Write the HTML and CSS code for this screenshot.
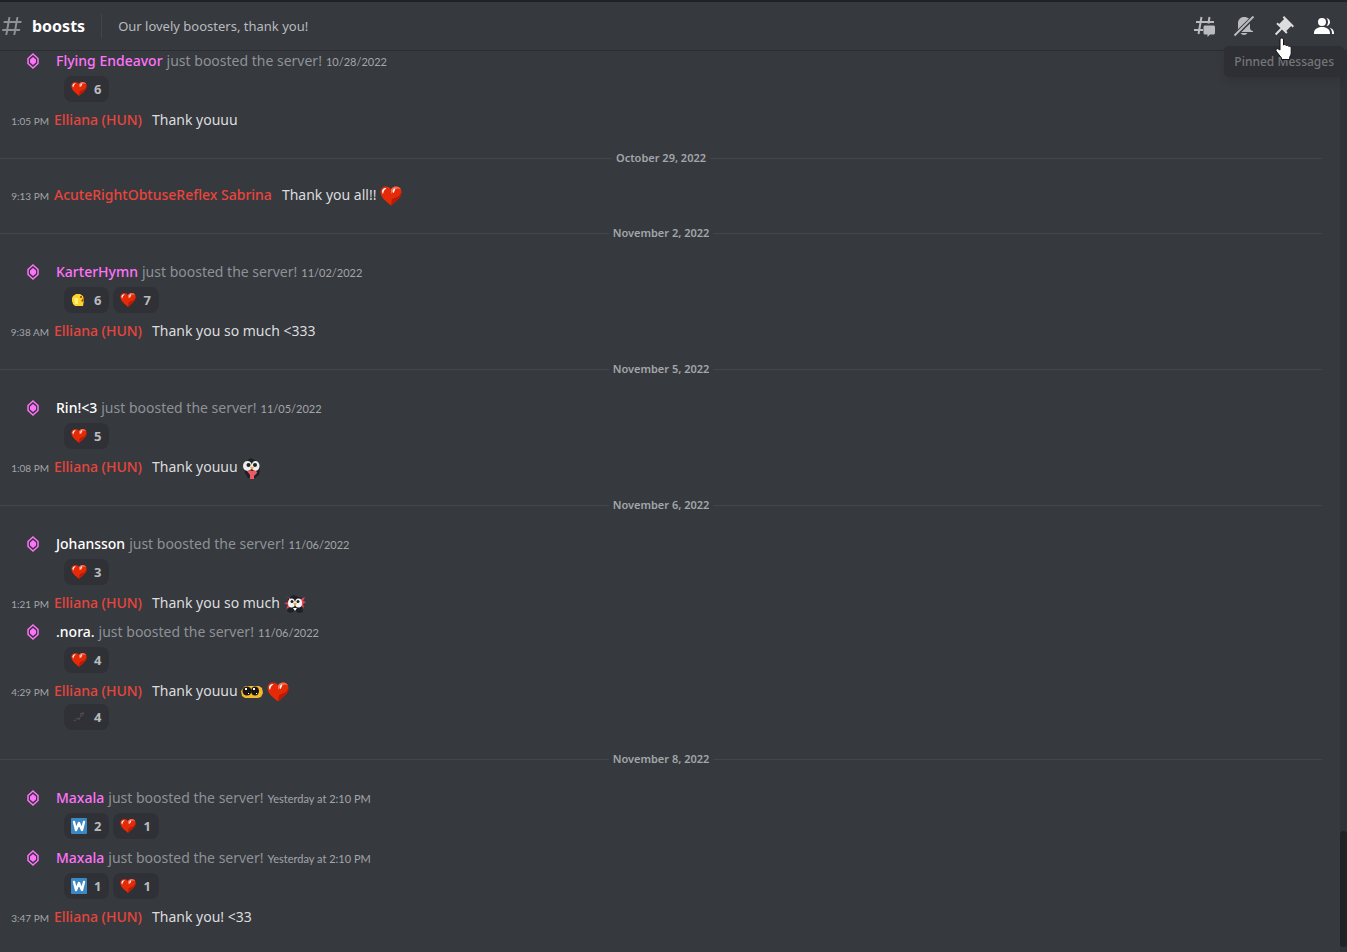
FILE: index.html
```html
<!DOCTYPE html>
<html lang="en">

<head>
    <meta charset="utf-8">
    <title>boosts</title>
    <link rel="stylesheet" href="styles.css">
</head>

<body>
    <!-- shared emoji and icons -->
    <svg class="sprites" aria-hidden="true">
        <symbol id="heart" viewBox="0 0 22 20">
            <path fill="#e52a08" d="M11 19.5C7 16 .5 12 .5 6C.5 2.500 3 .5 6 .5c2.300 0 4 1 5 3 1-2 2.700-3 5-3 3 0 5.500 2 5.500 5.500 0 6-6.500 10-10.500 13.500z" />
            <path fill="#b81b06" d="M21.500 6c0 6-6.500 10-10.500 13.500L12 13l7-3z" />
            <path fill="#fb6b50" d="M11 3.500C12 1.500 14 .5 16 .5s4 1 5 3l-3-1-4 1.500-3 4z" />
            <path fill="#fff" d="M2 6c0-2.500 1.500-4 4-4 1 .5-.5 1-1.500 2S3.500 7 3 8zM13 4c.5-1 1.500-1.600 2-1.500.5 1-.5 3-1.500 4.500-.8.500-1-1.500-.5-3z" />
        </symbol>
        <symbol id="gem" viewBox="0 0 14 16">
            <path fill="none" stroke="#ff73fa" stroke-width="1.500" d="M7 1l5 4.500v5L7 15l-5-4.500v-5z" />
            <path fill="#ff73fa" d="M7 4l3 2.500v3L7 12 4 9.500v-3z" />
        </symbol>
        <symbol id="face" viewBox="0 0 16 16">
            <path fill="#fbd52c" d="M1 6l1-2 3-2h4l3 2 1 4-1 6H4l-2-2-1-3z" />
            <path fill="#fff07a" d="M3 6h4v6H4z" />
            <path fill="#a85b10" d="M9 4h2v2H9zM12 6l1 2-1 2-2-1z" />
        </symbol>
        <symbol id="letter-w" viewBox="0 0 16 16">
            <rect width="16" height="16" rx="1" fill="#3b88c3" />
            <path fill="none" stroke="#fff" stroke-width="2.400" stroke-linejoin="round" stroke-linecap="round" d="M3 4l2 8 3-7 3 7 2-8" />
        </symbol>
        <symbol id="arrow" viewBox="0 0 16 16">
            <path fill="none" stroke="#554c53" stroke-width="1.500" stroke-dasharray="2 1" d="M3 12l4-3 1 1 4-6M9 5l3-1v3" />
        </symbol>
        <symbol id="penguin" viewBox="0 0 22 22">
            <path fill="#1e2124" d="M5 5l4-4 3 1 5 3 2 6-1 7-4 3H7l-3-5-1-5z" />
            <ellipse cx="6.500" cy="9" rx="4.500" ry="5" fill="#eee" />
            <ellipse cx="14.500" cy="9" rx="4" ry="5" fill="#eee" />
            <circle cx="7.500" cy="8" r="2" fill="#1e2124" />
            <circle cx="14" cy="8" r="2" fill="#1e2124" />
            <path fill="#f5a623" d="M9 10h4l-2 3z" />
            <path fill="#ef5866" d="M6 14c2-1 4-1 5 0 2-1 5-1 5 2l-3 3v3h-4v-4z" />
        </symbol>
        <symbol id="penguin-shy" viewBox="0 0 22 18">
            <path fill="#1e2124" d="M4 4l5-4 3 1 6 2v9l1 5-4 1-4-2-5 2-3-2 2-4z" />
            <path fill="#ee4357" d="M1 1l4 2v4L0 8l4 2-2 4 4-2V3zM17 4l4-2-2 4 3 1-3 2 1 4-4-3z" />
            <ellipse cx="7.500" cy="8" rx="3.500" ry="4.500" fill="#f4f4f4" />
            <ellipse cx="14.500" cy="8" rx="3.500" ry="4.500" fill="#f4f4f4" />
            <circle cx="8" cy="6.500" r="1.500" fill="#1e2124" />
            <circle cx="14" cy="6.500" r="1.500" fill="#1e2124" />
            <path fill="#f5a623" d="M9 8h4l-2 3z" />
            <path fill="#fff" d="M9 13h4l-2 3z" />
        </symbol>
        <symbol id="eyes" viewBox="0 0 22 14">
            <path fill="#f2b92b" d="M4 1h14l3 2 1 5-2 4-3 1H4l-3-2-1-5z" />
            <ellipse cx="6" cy="6" rx="4.500" ry="4.500" fill="#191516" />
            <ellipse cx="14" cy="6" rx="4" ry="4.500" fill="#191516" />
            <path fill="#fff" d="M4 3h2v2H4zM12 3h2v2h-2zM7 8h1v1H7zM15 8h1v1h-1z" />
        </symbol>
    </svg>

    <header class="header">
        <svg class="icon hash" viewBox="0 0 24 24">
            <path fill="currentColor" fill-rule="evenodd" d="M5.887 21c-.311 0-.547-.281-.493-.587L6 17H2.595c-.31 0-.546-.28-.492-.586l.175-1A.5.5 0 0 1 2.770 15H6.350l1.060-6H4.005c-.31 0-.546-.28-.492-.586l.175-1A.5.5 0 0 1 4.180 7H7.760l.637-3.587A.5.5 0 0 1 8.889 3h.984c.311 0 .547.281.493.587L9.760 7h6l.637-3.587A.5.5 0 0 1 16.889 3h.984c.311 0 .547.281.493.587L17.760 7h3.405c.31 0 .546.280.492.586l-.175 1a.5.5 0 0 1-.492.414H17.410l-1.060 6h3.405c.31 0 .546.280.492.586l-.175 1a.5.5 0 0 1-.492.414H16l-.637 3.587a.5.5 0 0 1-.492.413h-.984c-.311 0-.547-.281-.493-.587L14 17H8l-.637 3.587a.5.5 0 0 1-.492.413zM9.410 9l-1.060 6h6l1.060-6z" />
        </svg>
        <h1>boosts</h1>
        <p class="topic">Our lovely boosters, thank you!</p>
        <nav class="toolbar">
            <button aria-label="Threads">
                <svg class="icon" viewBox="0 0 24 24">
                    <path fill="none" stroke="currentColor" stroke-width="2" d="M9.500 3L6.500 20M17.500 3L16.400 9.500M4 8h18M2 16h9" />
                    <path fill="currentColor" d="M13 11.500h8.500c.8 0 1.500.7 1.500 1.500v6c0 .8-.7 1.500-1.500 1.500H18L15.500 23v-2.500H13c-.8 0-1.500-.7-1.500-1.500v-6c0-.8.7-1.500 1.500-1.500z" />
                </svg>
            </button>
            <button aria-label="Unmute Channel">
                <svg class="icon" viewBox="0 0 24 24">
                    <path fill="currentColor" d="M12 3c-3.314 0-6 2.686-6 6v5c0 .7-.2 1.300-.6 1.800L17 4.600C15.700 3.500 14 3 12 3zM18 9.500L9.500 18H21v-1c-1.656 0-3-1.343-3-3zM8.555 19a3.980 3.980 0 0 0 6.890 0z" />
                    <path stroke="currentColor" stroke-width="2" d="M2.500 21.500l19-19" />
                </svg>
            </button>
            <button class="active" aria-label="Pinned Messages">
                <svg class="icon" viewBox="0 0 24 24">
                    <path fill="currentColor" d="M22 12l-9.900-9.900-1.414 1.414 1.415 1.415-4.950 4.950-1.415-1.414L4.322 9.880l4.243 4.242-5.657 5.656 1.414 1.414 5.657-5.656 4.243 4.242 1.414-1.414-1.414-1.414L19.171 12l1.415 1.414z" />
                </svg>
            </button>
            <button class="on" aria-label="Member List">
                <svg class="icon" viewBox="0 0 24 24">
                    <path fill="currentColor" d="M14 8.006a4 4 0 1 1-8 0 4 4 0 0 1 8 0zM2 19.006c0-3.533 3.290-6 8-6 4.711 0 8 2.467 8 6v1H2zM20 20.006h2v-1c0-2.563-1.730-4.565-4.479-5.471C19.062 14.913 20 16.806 20 19.006zM14.883 11.908A4 4 0 0 0 18 8.006c0-2.037-1.531-3.724-3.503-3.969A5.990 5.990 0 0 1 16 8.006c0 1.443-.511 2.768-1.362 3.804z" />
                </svg>
            </button>
            <div class="tooltip" role="tooltip">Pinned Messages</div>
            <svg class="cursor" viewBox="0 0 17 24" aria-hidden="true">
                <path fill="#fff" stroke="#111" d="M5 13V3c0-2.700 3.500-2.700 3.500 0v5c1-.8 2.500-.5 2.800.6 1-.6 2.300-.2 2.500.8 1.200-.4 2.400.3 2.400 1.600v5c0 2-1.700 3.500-1.700 5.500v1H6.500v-1.500L1 14c-.8-1.500 1-3 2.300-2z" />
            </svg>
        </nav>
    </header>

    <main class="channel">
        <ol class="log">
            <li class="boost">
                <p class="line"><svg class="gem"><use href="#gem" /></svg><a class="name pink" href="#">Flying Endeavor</a> just boosted the server! <time>10/28/2022</time></p>
                <div class="reactions">
                    <button><svg><use href="#heart" /></svg>6</button>
                </div>
            </li>
            <li class="message">
                <p class="line"><time>1:05 PM</time><a class="name red" href="#">Elliana (HUN)</a><span>Thank youuu</span></p>
            </li>
            <li class="date"><span>October 29, 2022</span></li>
            <li class="message">
                <p class="line"><time>9:13 PM</time><a class="name red" href="#">AcuteRightObtuseReflex Sabrina</a><span>Thank you all!! <svg class="emoji"><use href="#heart" /></svg></span></p>
            </li>
            <li class="date"><span>November 2, 2022</span></li>
            <li class="boost">
                <p class="line"><svg class="gem"><use href="#gem" /></svg><a class="name pink" href="#">KarterHymn</a> just boosted the server! <time>11/02/2022</time></p>
                <div class="reactions">
                    <button><svg><use href="#face" /></svg>6</button>
                    <button><svg><use href="#heart" /></svg>7</button>
                </div>
            </li>
            <li class="message">
                <p class="line"><time>9:38 AM</time><a class="name red" href="#">Elliana (HUN)</a><span>Thank you so much &lt;333</span></p>
            </li>
            <li class="date"><span>November 5, 2022</span></li>
            <li class="boost">
                <p class="line"><svg class="gem"><use href="#gem" /></svg><a class="name" href="#">Rin!&lt;3</a> just boosted the server! <time>11/05/2022</time></p>
                <div class="reactions">
                    <button><svg><use href="#heart" /></svg>5</button>
                </div>
            </li>
            <li class="message">
                <p class="line"><time>1:08 PM</time><a class="name red" href="#">Elliana (HUN)</a><span>Thank youuu <svg class="emoji"><use href="#penguin" /></svg></span></p>
            </li>
            <li class="date"><span>November 6, 2022</span></li>
            <li class="boost">
                <p class="line"><svg class="gem"><use href="#gem" /></svg><a class="name" href="#">Johansson</a> just boosted the server! <time>11/06/2022</time></p>
                <div class="reactions">
                    <button><svg><use href="#heart" /></svg>3</button>
                </div>
            </li>
            <li class="message">
                <p class="line"><time>1:21 PM</time><a class="name red" href="#">Elliana (HUN)</a><span>Thank you so much <svg class="emoji"><use href="#penguin-shy" /></svg></span></p>
            </li>
            <li class="boost">
                <p class="line"><svg class="gem"><use href="#gem" /></svg><a class="name" href="#">.nora.</a> just boosted the server! <time>11/06/2022</time></p>
                <div class="reactions">
                    <button><svg><use href="#heart" /></svg>4</button>
                </div>
            </li>
            <li class="message">
                <p class="line"><time>4:29 PM</time><a class="name red" href="#">Elliana (HUN)</a><span>Thank youuu <svg class="emoji"><use href="#eyes" /></svg> <svg class="emoji"><use href="#heart" /></svg></span></p>
                <div class="reactions">
                    <button><svg><use href="#arrow" /></svg>4</button>
                </div>
            </li>
            <li class="date"><span>November 8, 2022</span></li>
            <li class="boost">
                <p class="line"><svg class="gem"><use href="#gem" /></svg><a class="name pink" href="#">Maxala</a> just boosted the server! <time>Yesterday at 2:10 PM</time></p>
                <div class="reactions">
                    <button><svg><use href="#letter-w" /></svg>2</button>
                    <button><svg><use href="#heart" /></svg>1</button>
                </div>
            </li>
            <li class="boost">
                <p class="line"><svg class="gem"><use href="#gem" /></svg><a class="name pink" href="#">Maxala</a> just boosted the server! <time>Yesterday at 2:10 PM</time></p>
                <div class="reactions">
                    <button><svg><use href="#letter-w" /></svg>1</button>
                    <button><svg><use href="#heart" /></svg>1</button>
                </div>
            </li>
            <li class="message">
                <p class="line"><time>3:47 PM</time><a class="name red" href="#">Elliana (HUN)</a><span>Thank you! &lt;33</span></p>
            </li>
        </ol>
        <div class="scrollbar"><div class="thumb"></div></div>
    </main>
</body>

</html>
```
FILE: styles.css
```css
* {
    box-sizing: border-box;
}

body {
    display: flex;
    flex-direction: column;
    height: 100vh;
    margin: 0;
    background: #36393e;
    color: #dcddde;
    font-family: "Noto Sans", sans-serif;
    font-size: 14px;
    line-height: 22px;
}

h1,
p,
ol {
    margin: 0;
    padding: 0;
}

button {
    border: none;
    background: none;
    padding: 0;
    color: inherit;
    font: inherit;
    cursor: pointer;
}

.sprites {
    position: absolute;
    width: 0;
    height: 0;
}

.icon {
    display: block;
    width: 24px;
    height: 24px;
}

/* header */
.header {
    display: flex;
    align-items: center;
    flex: none;
    height: 51px;
    padding-right: 11px;
    border-top: 2px solid #202225;
    border-bottom: 1px solid #2b2d32;
}

.hash {
    margin-right: 8px;
    color: #8e9297;
}

h1 {
    color: #fff;
    font-size: 16px;
    font-weight: 700;
}

.topic {
    flex: 1;
    margin-left: 16px;
    padding-left: 16px;
    border-left: 1px solid #42454b;
    color: #b9bbbe;
    font-size: 13px;
    line-height: 24px;
}

.toolbar {
    position: relative;
    display: flex;
    gap: 16px;
    color: #b9bbbe;
}

.toolbar .active {
    color: #dcddde;
}

.toolbar .on {
    color: #fff;
}

.tooltip {
    position: absolute;
    top: 32px;
    right: -8px;
    padding: 5px 10px;
    border-radius: 5px;
    background: #2d2f34;
    box-shadow: 0 4px 8px rgba(0, 0, 0, 0.12);
    color: #74767a;
    font-size: 12px;
    font-weight: 500;
    line-height: 21px;
    white-space: nowrap;
}

.cursor {
    position: absolute;
    top: 23px;
    right: 44px;
    width: 17px;
    height: 24px;
}

/* messages */
.channel {
    display: flex;
    flex: 1;
    min-height: 0;
}

.log {
    display: flex;
    flex: 1;
    flex-direction: column;
    justify-content: flex-end;
    margin-right: 18px;
    padding-bottom: 22px;
    overflow: hidden;
    list-style: none;
}

.log li {
    flex: none;
}

.line {
    display: flex;
    align-items: baseline;
}

.message .line {
    padding: 3px 0 2px;
}

.boost .line {
    padding: 4px 0;
    gap: 4px;
    color: #8e9297;
}

.boost {
    margin-top: 1px;
}

.boost + .boost {
    margin-top: 0;
}

.name {
    color: #fff;
    font-weight: 500;
    text-decoration: none;
}

.pink {
    color: #ff73fa;
}

.red {
    margin-right: 10px;
    color: #e8453c;
}

time {
    color: #a3a6aa;
    font-family: Lato, sans-serif;
    font-size: 11px;
    line-height: 16px;
}

.message time {
    width: 49px;
    margin-right: 5px;
    font-size: 10px;
    text-align: right;
}

.gem {
    align-self: center;
    width: 14px;
    height: 16px;
    margin: 0 12px 0 26px;
}

.emoji {
    width: 22px;
    height: 22px;
    vertical-align: middle;
    margin: -2px 0;
}

.reactions {
    display: flex;
    gap: 4px;
    padding: 0 0 4px 64px;
}

.reactions button {
    display: flex;
    align-items: center;
    gap: 7px;
    height: 26px;
    padding: 0 8px 0 7px;
    border-radius: 8px;
    background: #2f3136;
    color: #b9bbbe;
    font-size: 13px;
    font-weight: 700;
}

.reactions svg {
    width: 16px;
    height: 16px;
}

.date {
    display: flex;
    align-items: center;
    gap: 4px;
    margin: 19px 0 17px;
    color: #a3a6aa;
    font-size: 11px;
    font-weight: 600;
    line-height: 12px;
}

.date::before,
.date::after {
    content: "";
    flex: 1;
    border-top: 1px solid #42454c;
}

.scrollbar {
    display: flex;
    align-items: flex-end;
    width: 7px;
    padding-bottom: 5px;
    background: #2e3338;
}

.thumb {
    width: 100%;
    height: 13%;
    border-radius: 4px;
    background: #202225;
}
```
